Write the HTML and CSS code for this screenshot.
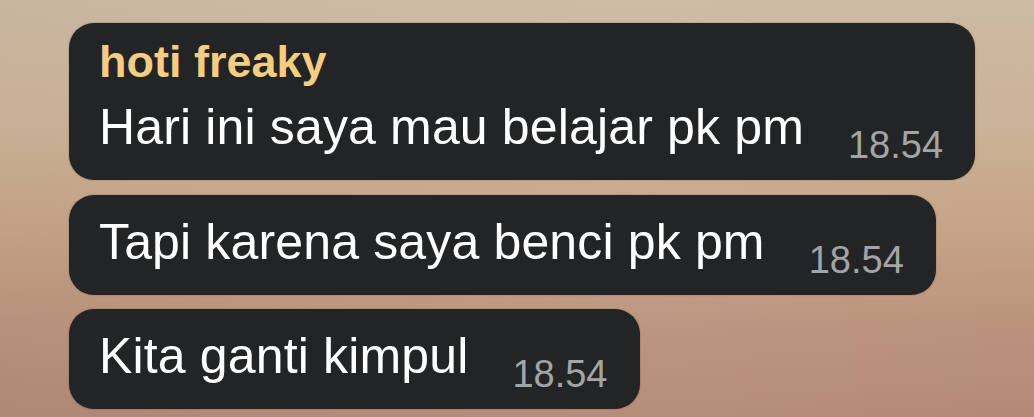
FILE: index.html
```html
<!DOCTYPE html>
<html lang="id">
<head>
<meta charset="utf-8">
<title>Chat</title>
<link rel="stylesheet" href="styles.css">
</head>
<body>
<div class="chat">
  <div class="bubble has-sender">
    <div class="sender">hoti freaky</div>
    <div class="row"><span class="text">Hari ini saya mau belajar pk pm</span><span class="time">18.54</span></div>
  </div>
  <div class="bubble">
    <div class="row"><span class="text">Tapi karena saya benci pk pm</span><span class="time">18.54</span></div>
  </div>
  <div class="bubble">
    <div class="row"><span class="text">Kita ganti kimpul</span><span class="time">18.54</span></div>
  </div>
</div>
</body>
</html>
```
FILE: styles.css
```css
html, body {
  margin: 0;
  height: 100%;
}
body {
  font-family: "Liberation Sans", Arial, sans-serif;
  background:
    linear-gradient(90deg, rgba(0,0,0,0.02) 0%, rgba(255,255,255,0.03) 60%, rgba(0,0,0,0.0) 100%),
    linear-gradient(180deg, #cdbaa3 0%, #cbb397 30%, #c6a386 55%, #bb937c 78%, #b38a77 100%);
  overflow: hidden;
}
.chat {
  display: flex;
  flex-direction: column;
  align-items: flex-start;
  gap: 14.5px;
  padding: 23px 0 0 69px;
}
.bubble {
  background: #232425;
  border-radius: 25px;
  padding: 17px 32px 16px 30px;
  box-shadow: 0 0 2px rgba(40, 25, 15, 0.35);
}
.bubble.has-sender {
  padding-top: 13px;
}
.sender {
  font-weight: bold;
  font-size: 45px;
  line-height: 52px;
  color: #f2cd82;
  margin-bottom: 9px;
}
.row {
  display: flex;
  align-items: flex-end;
}
.text {
  font-size: 50px;
  line-height: 60px;
  letter-spacing: 0.15px;
  color: #ffffff;
  margin-bottom: 7px;
  white-space: nowrap;
}
.time {
  font-size: 38px;
  line-height: 38px;
  color: #a4a4a4;
  margin-left: 44px;
  white-space: nowrap;
}
```
